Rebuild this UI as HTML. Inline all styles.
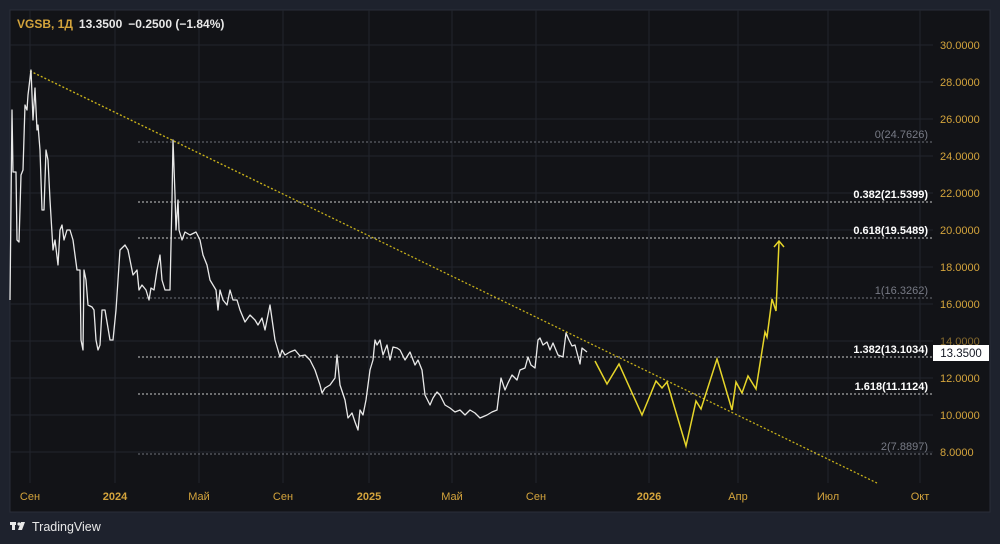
<!DOCTYPE html>
<html><head><meta charset="utf-8"><style>
html,body{margin:0;padding:0;background:#1e222d;width:1000px;height:544px;overflow:hidden;font-family:"Liberation Sans",sans-serif}
svg{position:absolute;left:0;top:0}
</style></head><body>
<svg width="1000" height="544" viewBox="0 0 1000 544" xmlns="http://www.w3.org/2000/svg">
<rect x="0" y="0" width="1000" height="544" fill="#1e222d"/>
<rect x="10" y="10" width="980" height="502" fill="#121317" stroke="#2a2e39" stroke-width="1"/>
<g stroke="#22252c" stroke-width="1">
<line x1="10" y1="45" x2="933" y2="45"/><line x1="10" y1="82" x2="933" y2="82"/><line x1="10" y1="119" x2="933" y2="119"/><line x1="10" y1="156" x2="933" y2="156"/><line x1="10" y1="193" x2="933" y2="193"/><line x1="10" y1="230" x2="933" y2="230"/><line x1="10" y1="267" x2="933" y2="267"/><line x1="10" y1="304" x2="933" y2="304"/><line x1="10" y1="341" x2="933" y2="341"/><line x1="10" y1="378" x2="933" y2="378"/><line x1="10" y1="415" x2="933" y2="415"/><line x1="10" y1="452" x2="933" y2="452"/>
<line x1="30" y1="10" x2="30" y2="483"/><line x1="115" y1="10" x2="115" y2="483"/><line x1="199" y1="10" x2="199" y2="483"/><line x1="283" y1="10" x2="283" y2="483"/><line x1="369" y1="10" x2="369" y2="483"/><line x1="452" y1="10" x2="452" y2="483"/><line x1="536" y1="10" x2="536" y2="483"/><line x1="649" y1="10" x2="649" y2="483"/><line x1="738" y1="10" x2="738" y2="483"/><line x1="828" y1="10" x2="828" y2="483"/><line x1="920" y1="10" x2="920" y2="483"/>
</g>
<g stroke-dasharray="2,2" stroke-width="1">
<line x1="138" y1="142" x2="933" y2="142" stroke="#6f7178"/>
<line x1="138" y1="202" x2="933" y2="202" stroke="#c8c8c8"/>
<line x1="138" y1="238" x2="933" y2="238" stroke="#c8c8c8"/>
<line x1="138" y1="298" x2="933" y2="298" stroke="#6f7178"/>
<line x1="138" y1="357" x2="933" y2="357" stroke="#c8c8c8"/>
<line x1="138" y1="394" x2="933" y2="394" stroke="#c8c8c8"/>
<line x1="138" y1="454" x2="933" y2="454" stroke="#6f7178"/>
</g>
<g font-size="11" text-anchor="end">
<text x="928" y="138" fill="#787b86">0(24.7626)</text>
<text x="928" y="198" fill="#fff" font-weight="bold">0.382(21.5399)</text>
<text x="928" y="234" fill="#fff" font-weight="bold">0.618(19.5489)</text>
<text x="928" y="294" fill="#787b86">1(16.3262)</text>
<text x="928" y="353" fill="#fff" font-weight="bold">1.382(13.1034)</text>
<text x="928" y="390" fill="#fff" font-weight="bold">1.618(11.1124)</text>
<text x="928" y="450" fill="#787b86">2(7.8897)</text>
</g>
<line x1="30" y1="71" x2="877" y2="483" stroke="#c9b21a" stroke-width="1.3" stroke-dasharray="2,2"/>
<polyline fill="none" stroke="#e8e8e8" stroke-width="1.3" stroke-linejoin="round" points="10,300 12,110 13,172 16,172 17,240 19,242 21,175 23,170 25,105 27,110 28,95 31,70 33,120 35,88 37,130 38,125 40,150 42,210 44,210 46,150 48,160 50,200 53,250 55,240 58,265 60,230 62,225 64,240 67,230 70,230 73,240 77,270 80,270 81,340 83,350 84,270 86,280 88,305 92,307 94,310 96,340 98,350 100,345 102,310 105,310 110,340 113,340 116,310 118,280 120,250 125,245 128,250 133,275 137,270 139,290 142,285 146,290 149,300 151,288 154,290 157,270 160,255 162,280 165,290 168,290 170,290 172,200 173,140 175,195 176,230 178,200 179,230 182,240 185,232 190,235 196,232 200,240 203,255 207,265 210,280 213,285 216,290 218,310 220,290 223,300 227,305 230,290 233,300 237,300 240,310 245,322 250,315 255,320 258,325 262,318 265,330 270,305 275,340 280,357 282,350 285,355 290,352 295,350 300,356 305,355 310,360 315,370 320,385 322,393 325,388 330,385 335,378 337,355 340,385 345,400 348,418 352,413 355,422 358,430 360,410 363,415 366,400 370,370 373,360 375,340 377,345 380,340 383,355 387,345 390,360 393,347 397,348 400,350 405,360 410,352 415,365 418,360 422,370 425,395 430,405 433,398 437,392 440,395 445,405 450,408 455,412 460,410 465,415 470,410 475,413 480,418 487,415 492,412 497,410 501,378 505,390 508,383 512,375 517,380 520,370 525,368 528,357 531,365 535,368 538,340 540,338 543,345 547,342 550,350 553,343 558,355 563,357 566,333 569,340 572,346 575,345 580,364 582,348 587,352"/>
<polyline fill="none" stroke="#e6d52a" stroke-width="1.5" stroke-linejoin="miter" points="595,361 607,384 619,364 642,415 656,381 662,388 667,382 686,446 696,401 701,409 717,359 732,410 736,382 742,393 748,376 756,389 765,332 767,337 772,299 776,311 779,242"/>
<polyline fill="none" stroke="#e6d52a" stroke-width="1.5" points="774,247 779,241 784,247"/>
<g font-size="11" fill="#d4a43c" text-anchor="start">
<text x="940" y="49">30.0000</text><text x="940" y="86">28.0000</text><text x="940" y="123">26.0000</text><text x="940" y="160">24.0000</text><text x="940" y="197">22.0000</text><text x="940" y="234">20.0000</text><text x="940" y="271">18.0000</text><text x="940" y="308">16.0000</text><text x="940" y="345" opacity="0.6">14.0000</text><text x="940" y="382">12.0000</text><text x="940" y="419">10.0000</text><text x="940" y="456">8.0000</text>
</g>
<rect x="933" y="345" width="56" height="16" fill="#fff"/>
<text x="961" y="357" font-size="11.5" fill="#131722" text-anchor="middle">13.3500</text>
<g font-size="11" fill="#d4a43c" text-anchor="middle">
<text x="30" y="500">Сен</text><text x="115" y="500" font-weight="bold">2024</text><text x="199" y="500">Май</text><text x="283" y="500">Сен</text><text x="369" y="500" font-weight="bold">2025</text><text x="452" y="500">Май</text><text x="536" y="500">Сен</text><text x="649" y="500" font-weight="bold">2026</text><text x="738" y="500">Апр</text><text x="828" y="500">Июл</text><text x="920" y="500">Окт</text>
</g>
<text x="17" y="28" font-size="12" font-weight="bold"><tspan fill="#d4a43c">VGSB, 1Д</tspan><tspan fill="#e8e8e8" dx="6">13.3500</tspan><tspan fill="#e8e8e8" dx="6">−0.2500 (−1.84%)</tspan></text>
<g fill="#e8e8e8">
<rect x="10" y="522" width="6" height="3"/><rect x="12" y="522" width="3" height="8"/>
<circle cx="19" cy="524" r="1.6"/>
<polygon points="21,522 25,522 22,530 18,530"/>
</g>
<text x="32" y="531" font-size="12.5" fill="#e8e8e8">TradingView</text>
</svg>
</body></html>
